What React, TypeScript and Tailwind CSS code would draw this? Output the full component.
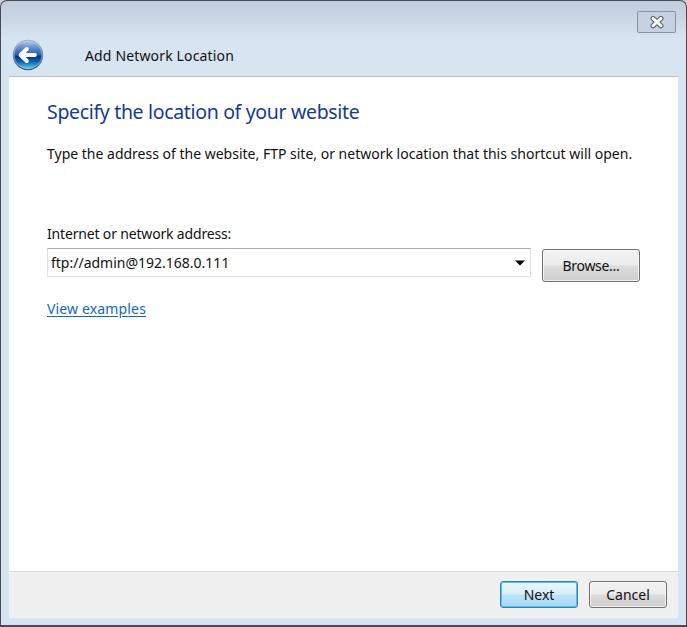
import React from "react";

function BackIcon() {
  return (
    <svg width="32" height="32" viewBox="0 0 32 32" aria-label="Back">
      <defs>
        <linearGradient id="orb" x1="0" y1="0" x2="0" y2="1">
          <stop offset="0" stopColor="#b4cbe8" />
          <stop offset="0.25" stopColor="#5f8acb" />
          <stop offset="0.5" stopColor="#2b5db0" />
          <stop offset="0.54" stopColor="#0a3282" />
          <stop offset="0.75" stopColor="#1464ac" />
          <stop offset="1" stopColor="#5ad8f8" />
        </linearGradient>
        <linearGradient id="rim" x1="0" y1="0" x2="0" y2="1">
          <stop offset="0" stopColor="#aab4c6" />
          <stop offset="0.5" stopColor="#6482b4" />
          <stop offset="1" stopColor="#2a5288" />
        </linearGradient>
      </defs>
      <circle cx="16" cy="16" r="15.2" fill="url(#rim)" />
      <circle cx="16" cy="16" r="13.9" fill="url(#orb)" stroke="#c3d7ef" strokeOpacity="0.55" strokeWidth="0.8" />
      <path d="M14.8 10 L8.6 16 L14.8 22 M9.5 16 H22.8" fill="none" stroke="#fff" strokeWidth="4" strokeLinecap="round" strokeLinejoin="round" />
    </svg>
  );
}

function CloseIcon() {
  return (
    <svg width="16" height="14" viewBox="0 0 16 14" fill="none" strokeLinecap="round">
      <path d="M4 3.4 L12 10.8 M12 3.4 L4 10.8" stroke="#5c626c" strokeWidth="5" />
      <path d="M4 3.4 L12 10.8 M12 3.4 L4 10.8" stroke="#fbfbfb" strokeWidth="2.9" />
    </svg>
  );
}

export default function App() {
  return (
    <div className="flex h-[627px] w-[687px] flex-col overflow-hidden bg-[#c9ced6] font-['Noto_Sans','Open_Sans',sans-serif] text-[14px] leading-5 text-[#111]">
      <div className="flex flex-1 flex-col rounded-t-[7px] border border-b-2 border-[#484b55] bg-[#d7e4f1] bg-[linear-gradient(to_bottom,#bfccdc_0px,#c8d5e4_15px,#d7e4f1_38px)] px-2 pb-[7px]">
        <header className="h-[75px] shrink-0">
          <div className="flex h-[37px] justify-end pt-[10px] pr-[2px]">
            <button className="flex h-[22px] w-[39px] items-center justify-center rounded-[2px] border border-[#8793a5] bg-[#c6d2e1]" aria-label="Close">
              <CloseIcon />
            </button>
          </div>
          <div className="flex h-[34px] items-center pl-[3px]">
            <BackIcon />
            <span className="mt-[2px] ml-[41px] tracking-[0.15px] whitespace-nowrap">Add Network Location</span>
          </div>
        </header>
        <main className="flex flex-1 flex-col border-t border-[#b5bfca] bg-white pl-[38px]">
          <h1 className="mt-[21px] h-[28px] text-[19.5px] leading-7 tracking-[-0.33px] whitespace-nowrap text-[#143a94]">Specify the location of your website</h1>
          <p className="mt-[18px] whitespace-nowrap">Type the address of the website, FTP site, or network location that this shortcut will open.</p>
          <label className="mt-[60px] tracking-[-0.17px] whitespace-nowrap">Internet or network address:</label>
          <div className="mt-[4px] flex h-[35px]">
            <div className="flex h-[29px] w-[484px] items-center justify-between border border-[#dfe1e6] border-t-[#abadb3] pr-[5px] pl-[3px]">
              <span className="whitespace-nowrap">ftp://admin@192.168.0.111</span>
              <svg width="10" height="6" viewBox="0 0 10 6"><path d="M0 0.5 H10 L5 5.5 Z" fill="#000" /></svg>
            </div>
            <button className="mt-px ml-[11px] h-[33px] w-[98px] rounded-[3px] border border-[#707070] bg-[linear-gradient(to_bottom,#f3f3f3_0%,#ebebeb_49%,#dcdcdc_51%,#cecece_100%)] tracking-[-0.3px] shadow-[inset_0_0_0_1px_#fafafacc]">Browse...</button>
          </div>
          <a className="mt-[16px] self-start tracking-[0.15px] whitespace-nowrap text-[#1468bd] underline underline-offset-2">View examples</a>
        </main>
        <footer className="flex h-[47px] shrink-0 items-start justify-end gap-[11px] border-t border-[#dedede] bg-[#f0f0f0] pt-[9px] pr-[11px]">
          <button className="h-[27px] w-[78px] rounded-[3px] border border-[#3c7fb1] bg-[linear-gradient(to_bottom,#e9f6fd_0%,#d8eefa_49%,#bfe5f9_51%,#a7d9f3_100%)] shadow-[inset_0_0_0_1px_#48c4ee]">Next</button>
          <button className="h-[27px] w-[78px] rounded-[3px] border border-[#707070] bg-[linear-gradient(to_bottom,#f3f3f3_0%,#ebebeb_49%,#dcdcdc_51%,#cecece_100%)] shadow-[inset_0_0_0_1px_#fafafacc]">Cancel</button>
        </footer>
      </div>
    </div>
  );
}
